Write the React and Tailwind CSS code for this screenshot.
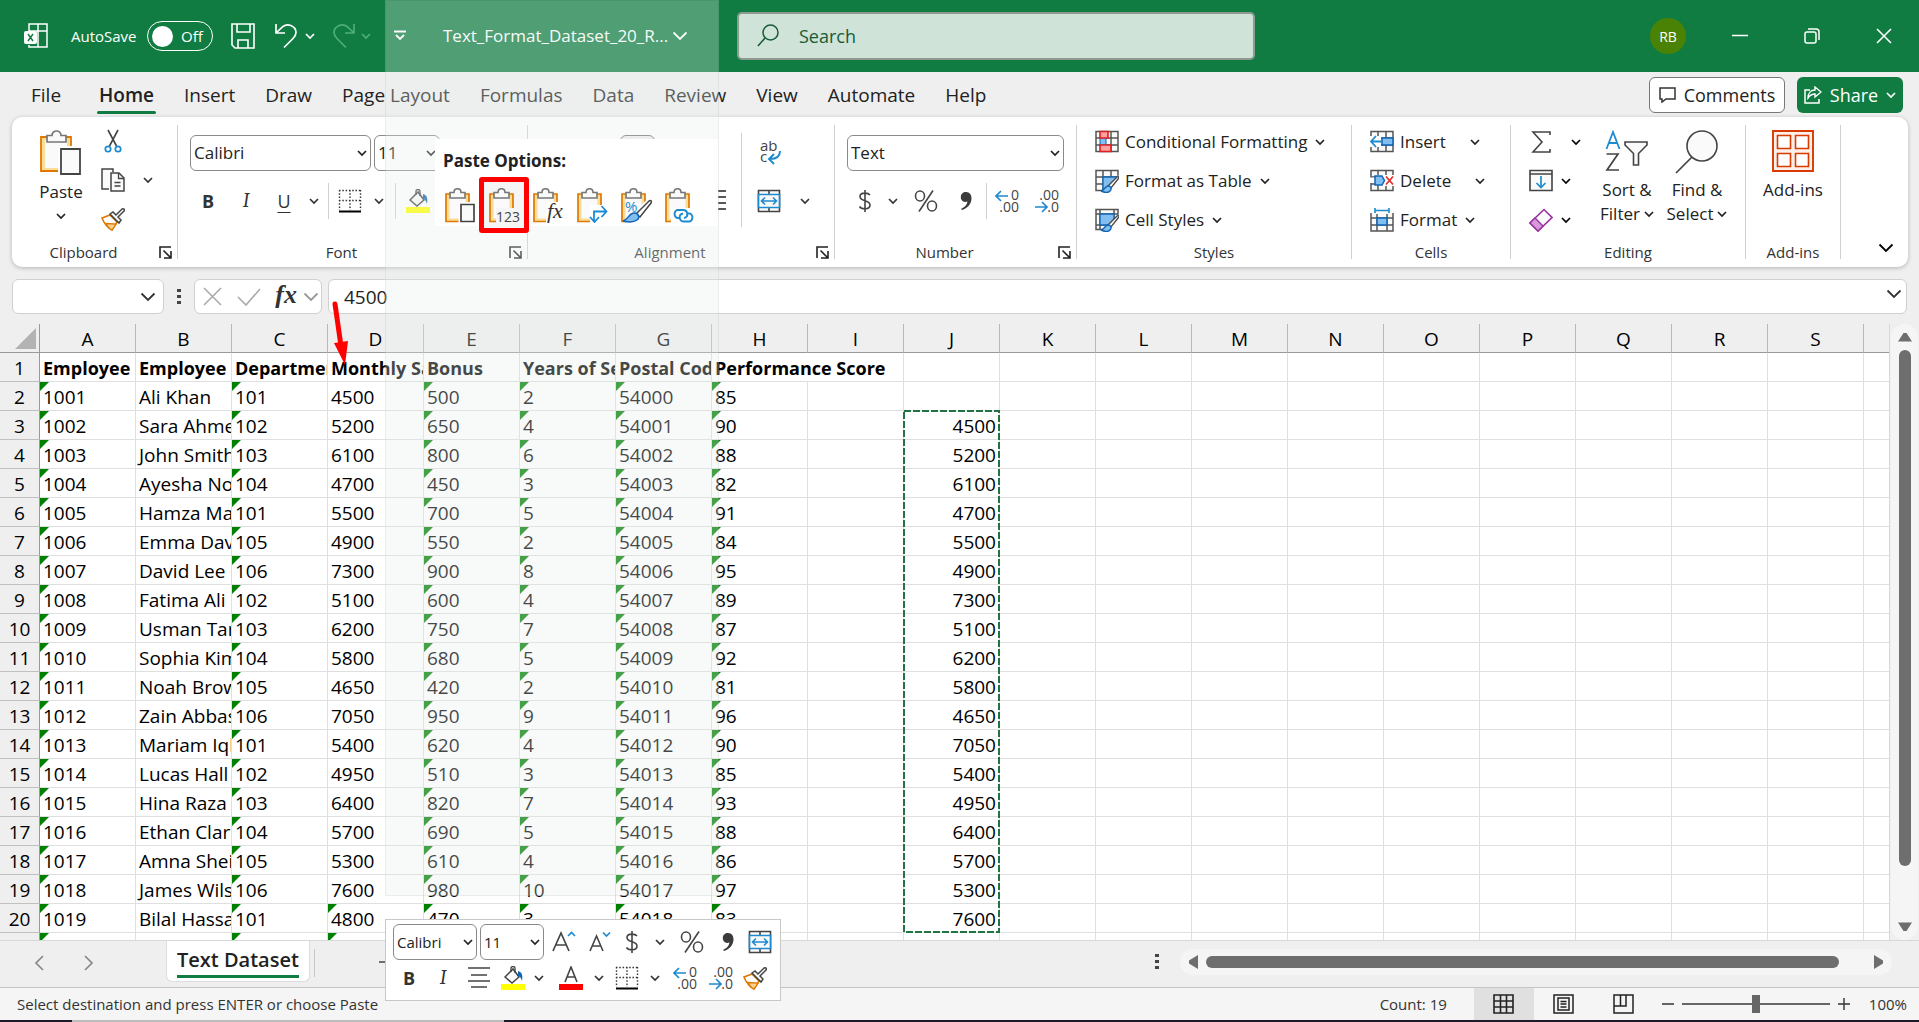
import React, { useState } from 'react'

const COLUMNS = 'ABCDEFGHIJKLMNOPQRST'.split('')

const HEADERS = ['Employee ID', 'Employee Name', 'Department', 'Monthly Salary', 'Bonus', 'Years of Service', 'Postal Code']

const ROWS = [
  [1001, 'Ali Khan', 101, 4500, 500, 2, 54000, 85],
  [1002, 'Sara Ahmed', 102, 5200, 650, 4, 54001, 90],
  [1003, 'John Smith', 103, 6100, 800, 6, 54002, 88],
  [1004, 'Ayesha Noor', 104, 4700, 450, 3, 54003, 82],
  [1005, 'Hamza Malik', 101, 5500, 700, 5, 54004, 91],
  [1006, 'Emma Davis', 105, 4900, 550, 2, 54005, 84],
  [1007, 'David Lee', 106, 7300, 900, 8, 54006, 95],
  [1008, 'Fatima Ali', 102, 5100, 600, 4, 54007, 89],
  [1009, 'Usman Tariq', 103, 6200, 750, 7, 54008, 87],
  [1010, 'Sophia Kim', 104, 5800, 680, 5, 54009, 92],
  [1011, 'Noah Brown', 105, 4650, 420, 2, 54010, 81],
  [1012, 'Zain Abbas', 106, 7050, 950, 9, 54011, 96],
  [1013, 'Mariam Iqbal', 101, 5400, 620, 4, 54012, 90],
  [1014, 'Lucas Hall', 102, 4950, 510, 3, 54013, 85],
  [1015, 'Hina Raza', 103, 6400, 820, 7, 54014, 93],
  [1016, 'Ethan Clark', 104, 5700, 690, 5, 54015, 88],
  [1017, 'Amna Sheikh', 105, 5300, 610, 4, 54016, 86],
  [1018, 'James Wilson', 106, 7600, 980, 10, 54017, 97],
  [1019, 'Bilal Hassan', 101, 4800, 470, 3, 54018, 83]
]

const COPIED = [4500, 5200, 6100, 4700, 5500, 4900, 7300, 5100, 6200, 5800, 4650, 7050, 5400, 4950, 6400, 5700, 5300, 7600]

const TABS = ['File', 'Home', 'Insert', 'Draw', 'Page Layout', 'Formulas', 'Data', 'Review', 'View', 'Automate', 'Help']

/* ---------- icons ---------- */

const Svg = ({ w = 24, h = 24, children, className = '' }) => (
  <svg width={w} height={h} viewBox={`0 0 ${w} ${h}`} fill="none" className={`shrink-0 ${className}`} aria-hidden="true">
    {children}
  </svg>
)

const Chevron = ({ className = '' }) => (
  <Svg w={10} h={8} className={className}>
    <path d="M1 2l4 4 4-4" stroke="currentColor" strokeWidth="1.700" />
  </Svg>
)

const BigChevron = ({ className = '' }) => (
  <Svg w={16} h={10} className={className}>
    <path d="M1.500 1.500L8 8l6.500-6.500" stroke="currentColor" strokeWidth="1.800" />
  </Svg>
)

const Board = () => (
  <>
    <path d="M1 6h23v27.500H1z" fill="#f9dc96" stroke="#e07800" strokeWidth="1.700" />
    <path d="M4.500 9h16v21.500h-16z" fill="#fafafa" />
    <path d="M5 4.500h4c0-5 7-5 7 0h4V10H5z" fill="#fafafa" stroke="#777" strokeWidth="1.600" />
  </>
)

const PasteBig = () => (
  <Svg w={42} h={46}>
    <path d="M1 7h30v34H1z" fill="#f9dc96" stroke="#e07800" strokeWidth="1.800" />
    <path d="M5 10h22v28H5z" fill="#fafafa" />
    <path d="M7 5.500h5c0-6 9-6 9 0h5V12H7z" fill="#fafafa" stroke="#777" strokeWidth="1.700" />
    <path d="M18 16h24v30H18z" fill="#fff" />
    <path d="M21 19h19v25H21z" fill="#fafafa" stroke="#444" strokeWidth="1.800" />
  </Svg>
)

const PastePlain = () => (
  <Svg w={31} h={35}>
    <Board />
    <path d="M13.500 14H31v21H13.500z" fill="#fff" />
    <path d="M16 16.500h13v17H16z" fill="#fafafa" stroke="#444" strokeWidth="1.700" />
  </Svg>
)

const PasteValues = () => (
  <Svg w={31} h={35}>
    <Board />
    <path d="M7 20h24v15H7z" fill="#f5f5f5" />
    <text x="7" y="34" fontSize="14" fill="#444" fontFamily="Open Sans, sans-serif">123</text>
  </Svg>
)

const PasteFormulas = () => (
  <Svg w={31} h={35}>
    <Board />
    <path d="M13 14h18v21H13z" fill="#fff" />
    <text x="14" y="30" fontSize="22" fontStyle="italic" fill="#333" fontFamily="Liberation Serif, serif">fx</text>
  </Svg>
)

const PasteTranspose = () => (
  <Svg w={31} h={35}>
    <Board />
    <path d="M13 17h18v18H13z" fill="#fff" />
    <path d="M17 33V23.500h12M13 29l4.500 5 4.500-5M24.500 18l5 5.500-5 5.500" stroke="#1e8bd0" strokeWidth="1.800" />
  </Svg>
)

const PasteFormatting = () => (
  <Svg w={31} h={35}>
    <Board />
    <path d="M5 30L28 10l3 3v22H5z" fill="#fff" />
    <text x="4" y="24" fontSize="15" fill="#1e8bd0" fontFamily="Open Sans, sans-serif">%</text>
    <path d="M15 26L28 13c2-1 3 0 2 2L19 29z" fill="#fff" stroke="#444" strokeWidth="1.500" />
    <path d="M2 33c5-1 6-8 11-8 5 0 6 5 3 7-4 3-10 2-14 1z" fill="#83bef0" stroke="#1065b5" strokeWidth="1.500" />
  </Svg>
)

const PasteLink = () => (
  <Svg w={31} h={35}>
    <Board />
    <path d="M6 20h25v15H6z" fill="#fff" />
    <path d="M14 30h-2a4.500 4.500 0 010-8h6c5 0 6 7 1 8M23 25.500h2a4.500 4.500 0 010 8h-6c-5 0-6-7-1-8" stroke="#1e8bd0" strokeWidth="1.900" />
  </Svg>
)

const CutIcon = () => (
  <Svg>
    <path d="M7 1l8.500 16M17 1L8.500 17" stroke="#444" strokeWidth="1.600" />
    <circle cx="7" cy="20" r="2.700" stroke="#1e8bd0" strokeWidth="1.700" />
    <circle cx="17" cy="20" r="2.700" stroke="#1e8bd0" strokeWidth="1.700" />
  </Svg>
)

const CopyIcon = () => (
  <Svg>
    <path d="M8 21H1V1h11v3" fill="#fafafa" stroke="#444" strokeWidth="1.500" />
    <path d="M10 5h8l5 5v13H10z" fill="#fafafa" stroke="#444" strokeWidth="1.500" />
    <path d="M17.500 5v5.500H23M13.500 14.500h6M13.500 18h6" stroke="#444" strokeWidth="1.300" />
  </Svg>
)

const PainterIcon = () => (
  <Svg>
    <path d="M1 11l8-3 7 7-5 8C7 21 3 16 1 11z" fill="#fff" stroke="#e07800" strokeWidth="1.600" />
    <path d="M5 16.500l10 .5-4 6c-2.500-1-4.500-3.500-6-6.500z" fill="#fbd492" stroke="#e07800" strokeWidth="1.300" />
    <path d="M9 7l3-2 3 3 6-6c2-1 3 1 2 2l-6 6 3 3-2 3z" fill="#fafafa" stroke="#444" strokeWidth="1.500" />
  </Svg>
)

const BordersIcon = () => (
  <Svg>
    <path d="M1.500 1v20M12 1v20M22.500 1v20M1 1.500h22M1 11.500h22" stroke="#333" strokeWidth="1.400" strokeDasharray="1.500 1.800" />
    <path d="M1 22.500h22" stroke="#000" strokeWidth="2" />
  </Svg>
)

const FillIcon = () => (
  <Svg>
    <path d="M4 11l8-8 6 8-7 6z" fill="#fafafa" stroke="#444" strokeWidth="1.500" />
    <path d="M10 6V2c0-2 4-2 4 0v5" stroke="#444" strokeWidth="1.300" />
    <path d="M17 5c4 1 5 4 4 10-1-3-2-5-4-5z" fill="#1065b5" />
    <path d="M0 18h24v6H0z" fill="#ff0" />
  </Svg>
)

const FontColorIcon = () => (
  <Svg>
    <path d="M6 16L12 1l6 15M8 11h8" stroke="#444" strokeWidth="1.600" />
    <path d="M0 18h24v6H0z" fill="#f00" />
  </Svg>
)

const WrapIcon = () => (
  <Svg>
    <text x="1" y="10" fontSize="15" fill="#444" fontFamily="Open Sans, sans-serif">ab</text>
    <text x="1" y="21" fontSize="15" fill="#444" fontFamily="Open Sans, sans-serif">c</text>
    <path d="M21 10c0 5-3 8-10 8M15 13l-5 5 5 5" stroke="#1e8bd0" strokeWidth="1.900" />
  </Svg>
)

const MergeIcon = () => (
  <Svg>
    <path d="M1.500 1.500h21v21h-21zM12 1v5M12 18v5" fill="#fafafa" stroke="#444" strokeWidth="1.600" />
    <path d="M1.500 5.500h21v13h-21z" fill="#fafafa" stroke="#1e8bd0" strokeWidth="1.700" />
    <path d="M4.500 12h15M8 8.500L4.500 12 8 15.500M16 8.500l3.500 3.500-3.500 3.500" stroke="#1e8bd0" strokeWidth="1.600" />
  </Svg>
)

const IncDecimal = () => (
  <Svg>
    <path d="M1 7h12M6 2L1 7l5 5" stroke="#1e8bd0" strokeWidth="1.700" />
    <text x="24" y="11" textAnchor="end" fontSize="14" fill="#444" fontFamily="Open Sans, sans-serif">0</text>
    <text x="24" y="23" textAnchor="end" fontSize="14" fill="#444" fontFamily="Open Sans, sans-serif">.00</text>
  </Svg>
)

const DecDecimal = () => (
  <Svg>
    <text x="24" y="11" textAnchor="end" fontSize="14" fill="#444" fontFamily="Open Sans, sans-serif">.00</text>
    <text x="24" y="23" textAnchor="end" fontSize="14" fill="#444" fontFamily="Open Sans, sans-serif">.0</text>
    <path d="M0 18h12M7 13l5 5-5 5" stroke="#1e8bd0" strokeWidth="1.700" />
  </Svg>
)

const CommaIcon = () => (
  <Svg w={12} h={20}>
    <path d="M6 1c4 0 5.500 3 5.500 6.500C11.500 13 7 18 1.500 19v-1.500C5 16 7 14 7.500 10.500 3 12 .8 9 .8 6 .8 3 3 1 6 1z" fill="#3b3b3b" />
  </Svg>
)

const DollarIcon = () => (
  <Svg w={14} h={24}>
    <path d="M12 6C10 3.500 2 3 2 7.500 2 13 12 10.500 12 16c0 5-8.500 4.500-10.500 1.500M7 1v22" stroke="#444" strokeWidth="1.600" />
  </Svg>
)

const PercentIcon = () => (
  <Svg>
    <path d="M19 1.500L5 22.500" stroke="#444" strokeWidth="1.600" />
    <ellipse cx="6" cy="7" rx="4.500" ry="5" stroke="#444" strokeWidth="1.600" />
    <ellipse cx="18" cy="17" rx="4.500" ry="5" stroke="#444" strokeWidth="1.600" />
  </Svg>
)

const Grid = ({ d = 'M1 1.500h22v20H1zM1 8h22M1 15h22M8 1v21M16 1v21' }) => (
  <path d={d} fill="#fafafa" stroke="#555" strokeWidth="1.500" />
)

const Brush = () => (
  <>
    <path d="M13 23L24 6v17z" fill="#fff" />
    <path d="M13 17L22 8c1.500-1 2.500 0 1.500 1.500L16 19z" fill="#fafafa" stroke="#444" strokeWidth="1.300" />
    <path d="M6 22c3 0 4-5 7-5s4 3 2 5-6 1.500-9 0z" fill="#83bef0" stroke="#1065b5" strokeWidth="1.400" />
  </>
)

const ConditionalIcon = () => (
  <Svg>
    <Grid />
    <path d="M5 8h6v7H5z" fill="#83bef0" stroke="#1065b5" />
    <path d="M5 1.500h8V8H5zM5 15h11v6.500H5z" fill="#ff9f9f" stroke="#e02020" strokeWidth="1.600" />
  </Svg>
)

const TableIcon = () => (
  <Svg>
    <Grid />
    <path d="M8 8h15v14H8z" fill="#83bef0" stroke="#1065b5" strokeWidth="1.300" />
    <Brush />
  </Svg>
)

const CellStylesIcon = () => (
  <Svg>
    <Grid d="M1 1.500h22v20H1zM1 6h22M1 17h22M5 1v21M19 1v21" />
    <path d="M5 6h14v11H5z" fill="#83bef0" stroke="#1065b5" strokeWidth="1.300" />
    <Brush />
  </Svg>
)

const InsertCellsIcon = () => (
  <Svg>
    <Grid />
    <path d="M12 8h11v7H12z" fill="#83bef0" stroke="#1065b5" strokeWidth="1.500" />
    <path d="M0 6h11v11H0z" fill="#fff" />
    <path d="M1 11.500h11M6 6l-5 5.500L6 17" stroke="#1e8bd0" strokeWidth="1.800" />
  </Svg>
)

const DeleteCellsIcon = () => (
  <Svg>
    <Grid d="M1 1.500h22v20H1zM1 8h5M1 15h5M8 1v5M16 1v5M8 16v5M16 16v5" />
    <path d="M13 6h11v11H13zM0 8.500h4v5.500H0z" fill="#fff" />
    <path d="M5 7h7l2.500 4.500L12 16H5z" fill="#83bef0" stroke="#1065b5" strokeWidth="1.500" />
    <path d="M16 7.500l7 8M23 7.500l-7 8" stroke="#e83030" strokeWidth="1.800" />
  </Svg>
)

const FormatCellsIcon = () => (
  <Svg>
    <Grid d="M1 5v18h22V5M1 10h22M1 17h22M7 6v17M17 6v17" />
    <path d="M7 10h10v7H7z" fill="#83bef0" stroke="#1065b5" strokeWidth="1.500" />
    <path d="M5 2.500h14M5 0v5M19 0v5" stroke="#1e8bd0" strokeWidth="1.600" />
  </Svg>
)

const SigmaIcon = () => (
  <Svg>
    <path d="M21 5V2H4l9 10-9 10h17v-3" stroke="#444" strokeWidth="1.600" />
  </Svg>
)

const FillDownIcon = () => (
  <Svg>
    <path d="M1 1.500h22v20H1zM1 5h22" fill="#fafafa" stroke="#444" strokeWidth="1.600" />
    <path d="M12 7v11M7.500 14l4.500 4.500 4.500-4.500" stroke="#1e8bd0" strokeWidth="1.700" />
  </Svg>
)

const EraserIcon = () => (
  <Svg>
    <path d="M15 1.500l8 8L9 23l-8-8z" fill="#fafafa" stroke="#9a34a0" strokeWidth="1.600" />
    <path d="M6 10l8 8-5 5-8-8z" fill="#d898dc" stroke="#9a34a0" strokeWidth="1.400" />
  </Svg>
)

const SortIcon = () => (
  <Svg w={44} h={44}>
    <path d="M1.500 19L8 2l6.500 17M4 13h8" stroke="#1e8bd0" strokeWidth="1.800" />
    <path d="M1.500 24H13L2 40h12" stroke="#444" strokeWidth="1.700" />
    <path d="M20 12h22v3l-8.500 8.500V35h-5V23.500L20 15z" fill="#fafafa" stroke="#444" strokeWidth="1.600" />
  </Svg>
)

const FindIcon = () => (
  <Svg w={44} h={44}>
    <circle cx="27" cy="16" r="15" fill="#fafafa" stroke="#444" strokeWidth="1.600" />
    <path d="M17 27L1 43" stroke="#444" strokeWidth="1.700" />
  </Svg>
)

const AddinsIcon = () => (
  <Svg w={42} h={42}>
    <path d="M1 1h40v40H1z" fill="#fdf0ea" stroke="#d83b01" strokeWidth="1.900" />
    <path d="M5.500 5.500h13v13h-13zM23.500 5.500h13v13h-13zM5.500 23.500h13v13h-13zM23.500 23.500h13v13h-13z" fill="#fff" stroke="#d83b01" strokeWidth="1.600" />
  </Svg>
)

const Launcher = ({ className = '' }) => (
  <button aria-label="More options" className={`flex size-4 items-center justify-center ${className}`}>
    <Svg w={13} h={13}>
      <path d="M1 12V1h11M4.500 4.500l7 7M12 5v7H5" stroke="#222" strokeWidth="1.600" />
    </Svg>
  </button>
)

/* ---------- small building blocks ---------- */

const IconBtn = ({ label, children, className = 'w-10' }) => (
  <button aria-label={label} className={`flex h-9 shrink-0 items-center justify-center text-[#333] ${className}`}>
    {children}
  </button>
)

const Picker = ({ label, options, className = '', textClass = 'text-[17px]' }) => (
  <label className={`relative block h-9 ${className}`}>
    <span className="sr-only">{label}</span>
    <select className={`h-9 w-full appearance-none rounded-md border border-[#8a8a8a] bg-white pl-[3px] text-[#222] ${textClass}`}>
      {options.map((o) => <option key={o}>{o}</option>)}
    </select>
    <Chevron className="pointer-events-none absolute top-[14px] right-1 text-[#222]" />
  </label>
)

const Group = ({ name, className = '', launcher = false, children }) => (
  <>
    <section aria-label={name} className={`flex shrink-0 flex-col pt-[5px] ${className}`}>
      <div className="h-[118px]">{children}</div>
      <div className={`relative flex h-6 items-center justify-center text-[15px] text-[#333] ${launcher ? 'pr-[22px]' : ''}`}>
        {name}
        {launcher && <Launcher className="absolute right-1" />}
      </div>
    </section>
    <div className="my-2 w-px shrink-0 bg-[#d0d0d0]" />
  </>
)

const MenuRow = ({ icon, text, gap = 'gap-2' }) => (
  <button className="flex h-[39px] items-center gap-[6px] text-[17px] text-[#222]">
    {icon}
    <span className={`flex items-center ${gap}`}>{text}<Chevron /></span>
  </button>
)

const Divider = () => <div className="h-9 w-px shrink-0 bg-[#d0d0d0]" />

/* ---------- sections ---------- */

function TitleBar() {
  const [autoSave, setAutoSave] = useState(false)

  return (
    <header className="flex h-[72px] shrink-0 items-center bg-[#107c41] text-white">
      <Svg w={24} h={26} className="ml-6">
        <path d="M5 9V1h18v23H5v-2M14 1v23M5 8h18" stroke="#fff" strokeWidth="1.500" />
        <rect x="0" y="8" width="13" height="13" rx="2" fill="#fff" />
        <path d="M4 11l5 7M9 11l-5 7" stroke="#107c41" strokeWidth="1.500" />
      </Svg>
      <span className="ml-[23px] w-[66px] text-[15px]">AutoSave</span>
      <button
        role="switch"
        aria-checked={autoSave}
        aria-label="AutoSave"
        onClick={() => setAutoSave(!autoSave)}
        className="ml-[10px] flex h-[30px] w-[66px] items-center gap-2 rounded-full border border-white pl-1 text-[15px]"
      >
        <span className="size-[21px] rounded-full bg-white" />
        {autoSave ? 'On' : 'Off'}
      </button>
      <button aria-label="Save" className="ml-[18px]">
        <Svg w={24} h={26}>
          <path d="M1 1h22v24H4l-3-3zM6 1v8h13V1M7 25v-8h10v8" stroke="#fff" strokeWidth="1.600" />
        </Svg>
      </button>
      <button aria-label="Undo" className="ml-5">
        <Svg w={24} h={26}>
          <path d="M1 1v9h9M1.500 9.500L8 3.500c5-4 13 0 13 6 0 3-1 4-3 6l-9 9" stroke="#fff" strokeWidth="1.700" />
        </Svg>
      </button>
      <button aria-label="Undo history" className="ml-[6px]"><Chevron /></button>
      <button aria-label="Redo" className="ml-4 text-[#4fae78]">
        <Svg w={24} h={26}>
          <path d="M23 1v9h-9M22.500 9.500L16 3.500c-5-4-13 0-13 6 0 3 1 4 3 6l9 9" stroke="currentColor" strokeWidth="1.700" />
        </Svg>
      </button>
      <button aria-label="Redo history" className="ml-[6px] text-[#4fae78]"><Chevron /></button>
      <button aria-label="Customize toolbar" className="ml-[23px]">
        <Svg w={12} h={12}>
          <path d="M0 1.500h12M2 5l4 4 4-4" stroke="#fff" strokeWidth="1.900" />
        </Svg>
      </button>
      <button className="ml-[37px] flex w-[246px] items-center gap-1 text-[17px]">
        <span className="whitespace-nowrap">Text_Format_Dataset_20_R...</span>
        <BigChevron />
      </button>
      <label className="ml-12 flex h-12 w-[518px] items-center gap-5 rounded-[5px] border-2 border-[#8d9b93] bg-[#cfe3d8] pl-[18px] text-[#185c37]">
        <Svg w={22} h={24}>
          <circle cx="13.500" cy="8.500" r="7.500" stroke="currentColor" strokeWidth="1.500" />
          <path d="M8 14L1 22" stroke="currentColor" strokeWidth="1.600" />
        </Svg>
        <input type="search" placeholder="Search" aria-label="Search" className="min-w-0 flex-1 bg-transparent text-lg outline-none placeholder:text-[#185c37]" />
      </label>
      <div className="ml-auto flex items-center">
        <button aria-label="Account" className="mr-[46px] size-9 rounded-full bg-[#498205] text-[14px]">RB</button>
        <button aria-label="Minimize" className="mr-[56px]">
          <Svg w={16} h={16}><path d="M0 7.500h16" stroke="#fff" strokeWidth="1.500" /></Svg>
        </button>
        <button aria-label="Restore" className="mr-[56px]">
          <Svg w={16} h={16}>
            <rect x="1" y="4" width="11" height="11" rx="2" stroke="#fff" strokeWidth="1.500" />
            <path d="M4 1h8c2 0 3 1 3 3v8" stroke="#fff" strokeWidth="1.500" />
          </Svg>
        </button>
        <button aria-label="Close" className="mr-[27px]">
          <Svg w={16} h={16}><path d="M1 1l14 14M15 1L1 15" stroke="#fff" strokeWidth="1.600" /></Svg>
        </button>
      </div>
    </header>
  )
}

function RibbonTabs() {
  const [active, setActive] = useState('Home')

  return (
    <nav className="flex h-[45px] shrink-0 items-center pr-4 pl-4 text-lg text-[#222]">
      {TABS.map((t) => (
        <button key={t} onClick={() => setActive(t)} className="relative h-[38px] px-[15px] pt-[2px] text-[19px] whitespace-nowrap first:mr-2">
          <span className={active === t ? 'font-semibold' : ''}>{t}</span>
          {active === t && <span className="absolute inset-x-[13px] bottom-0 h-[3px] rounded bg-[#107c41]" />}
        </button>
      ))}
      <button className="mr-3 ml-auto flex h-9 w-[136px] items-center justify-center gap-2 rounded-md border border-[#777] bg-white">
        <Svg w={17} h={16}><path d="M1 1h15v11H7l-4 3v-3H1z" stroke="#333" strokeWidth="1.500" /></Svg>
        Comments
      </button>
      <button className="flex h-9 w-[106px] items-center justify-center gap-2 rounded-md bg-[#107c41] text-white">
        <Svg w={18} h={18}>
          <path d="M6 4H1v13h14v-4" stroke="#fff" strokeWidth="1.500" />
          <path d="M11 1l6 5-6 5V8C8 8 6 9 4 12c0-5 3-8 7-8z" stroke="#fff" strokeWidth="1.400" />
        </Svg>
        Share
        <Chevron />
      </button>
    </nav>
  )
}

function Ribbon() {
  return (
    <div className="mx-3 mr-[11px] flex h-[150px] shrink-0 rounded-[10px] bg-white shadow-[0_1px_4px_rgba(0,0,0,0.250)]">
      <Group name="Clipboard" launcher className="w-[165px]">
        <div className="flex pl-3">
          <button className="flex w-[74px] flex-col items-center pt-2 text-[17px] text-[#222]">
            <PasteBig />
            <span className="mt-1 leading-6">Paste</span>
            <Chevron className="mt-2" />
          </button>
          <div className="flex flex-col gap-[3px] pt-px pl-[2px]">
            <IconBtn label="Cut" className="w-[26px]"><CutIcon /></IconBtn>
            <IconBtn label="Copy" className="w-[26px]"><CopyIcon /></IconBtn>
            <IconBtn label="Format painter" className="w-[26px]"><PainterIcon /></IconBtn>
          </div>
          <IconBtn label="Copy options" className="mt-10 ml-[2px] w-10"><Chevron /></IconBtn>
        </div>
      </Group>

      <Group name="Font" launcher className="w-[349px]">
        <div className="flex gap-[3px] pt-[13px] pl-3">
          <Picker label="Font" options={['Calibri', 'Arial']} className="w-[181px]" />
          <Picker label="Font size" options={['11', '12']} className="w-[66px]" />
        </div>
        <div className="mt-3 flex items-center pl-3">
          <IconBtn label="Bold" className="w-9 text-lg font-bold">B</IconBtn>
          <IconBtn label="Italic" className="w-10 font-serif text-xl italic">I</IconBtn>
          <IconBtn label="Underline" className="w-9 text-lg underline underline-offset-4">U</IconBtn>
          <IconBtn label="Underline options" className="mr-[2px] w-6"><Chevron /></IconBtn>
          <Divider />
          <IconBtn label="Borders" className="w-[42px]"><BordersIcon /></IconBtn>
          <IconBtn label="Border options" className="mr-2 w-4"><Chevron /></IconBtn>
          <Divider />
          <IconBtn label="Fill color" className="w-11"><FillIcon /></IconBtn>
        </div>
      </Group>

      <Group name="Alignment" launcher className="w-[306px]">
        <div className="flex pl-[92px]">
          <div className="flex w-[108px] flex-col items-start">
            <button aria-label="Middle align" className="mt-[13px] h-9 w-[35px] rounded-md border border-[#777] bg-[#f0f0f0]" />
            <IconBtn label="Increase indent" className="mt-3 w-6 self-end">
              <Svg><path d="M1 2h21M7 8h15M7 14h15M1 20h21" stroke="#222" strokeWidth="1.600" /></Svg>
            </IconBtn>
          </div>
          <div className="mt-[11px] ml-[13px] h-[94px] w-px bg-[#d0d0d0]" />
          <div className="flex flex-col items-start pl-[7px]">
            <IconBtn label="Wrap text" className="mt-[13px] w-11"><WrapIcon /></IconBtn>
            <div className="mt-3 flex">
              <IconBtn label="Merge and center"><MergeIcon /></IconBtn>
              <IconBtn label="Merge options" className="w-8"><Chevron /></IconBtn>
            </div>
          </div>
        </div>
      </Group>

      <Group name="Number" launcher className="w-[241px]">
        <div className="px-3 pt-[13px]">
          <Picker label="Number format" options={['Text', 'General']} />
        </div>
        <div className="mt-3 flex items-center pl-3">
          <IconBtn label="Currency" className="w-9"><DollarIcon /></IconBtn>
          <IconBtn label="Currency options" className="mr-[3px] w-5"><Chevron /></IconBtn>
          <IconBtn label="Percent"><PercentIcon /></IconBtn>
          <IconBtn label="Comma style"><CommaIcon /></IconBtn>
          <Divider />
          <IconBtn label="Increase decimal"><IncDecimal /></IconBtn>
          <IconBtn label="Decrease decimal"><DecDecimal /></IconBtn>
        </div>
      </Group>

      <Group name="Styles" className="w-[274px]">
        <div className="pl-[18px]">
          <MenuRow icon={<ConditionalIcon />} text="Conditional Formatting" />
          <MenuRow icon={<TableIcon />} text="Format as Table" />
          <MenuRow icon={<CellStylesIcon />} text="Cell Styles" />
        </div>
      </Group>

      <Group name="Cells" className="w-[158px]">
        <div className="pl-[18px]">
          <MenuRow icon={<InsertCellsIcon />} text="Insert" gap="gap-6" />
          <MenuRow icon={<DeleteCellsIcon />} text="Delete" gap="gap-6" />
          <MenuRow icon={<FormatCellsIcon />} text="Format" />
        </div>
      </Group>

      <Group name="Editing" className="w-[234px]">
        <div className="flex pl-[18px]">
          <div className="w-16">
            <button aria-label="AutoSum" className="flex h-[39px] items-center gap-[18px]"><SigmaIcon /><Chevron /></button>
            <button aria-label="Fill" className="flex h-[39px] items-center gap-2"><FillDownIcon /><Chevron /></button>
            <button aria-label="Clear" className="flex h-[39px] items-center gap-2"><EraserIcon /><Chevron /></button>
          </div>
          <button className="flex w-[68px] flex-col items-center pt-2 text-[17px] leading-6 text-[#222]">
            <SortIcon />
            <span className="mt-1 whitespace-nowrap">Sort &amp;</span>
            <span className="flex items-center gap-1">Filter <Chevron /></span>
          </button>
          <button className="flex w-[72px] flex-col items-center pt-2 text-[17px] leading-6 text-[#222]">
            <FindIcon />
            <span className="mt-1 whitespace-nowrap">Find &amp;</span>
            <span className="flex items-center gap-1">Select <Chevron /></span>
          </button>
        </div>
      </Group>

      <Group name="Add-ins" className="w-[94px]">
        <button className="flex w-full flex-col items-center pt-2 text-[17px] leading-6 text-[#222]">
          <AddinsIcon />
          <span className="mt-[6px]">Add-ins</span>
        </button>
      </Group>

      <button aria-label="Collapse ribbon" className="mt-auto mr-[14px] mb-[14px] ml-auto"><BigChevron /></button>
    </div>
  )
}

function FormulaBar() {
  return (
    <div className="mx-3 mt-3 mb-[10px] flex h-[35px] shrink-0">
      <label className="relative w-[152px]">
        <span className="sr-only">Name box</span>
        <input className="h-full w-full rounded-md border border-[#d0d0d0] bg-white px-2" />
        <BigChevron className="absolute top-[13px] right-2 text-[#333]" />
      </label>
      <div className="flex w-[30px] items-center justify-center">
        <Svg w={4} h={16}><path d="M0 0h4v3H0zM0 6h4v3H0zM0 12h4v3H0z" fill="#444" /></Svg>
      </div>
      <div className="flex w-32 items-center rounded-md border border-[#d0d0d0] bg-white pl-2">
        <button aria-label="Cancel"><Svg w={20} h={20}><path d="M1 1l17 17M18 1L1 18" stroke="#aaa" strokeWidth="1.600" /></Svg></button>
        <button aria-label="Enter" className="ml-[14px]"><Svg w={24} h={18}><path d="M1 9l8 8L23 1" stroke="#aaa" strokeWidth="1.600" /></Svg></button>
        <button aria-label="Insert function" className="ml-auto pb-1 font-['Liberation_Serif',serif] text-[26px] leading-none font-bold text-[#333] italic">fx</button>
        <BigChevron className="mr-[2px] ml-[6px] text-[#999]" />
      </div>
      <label className="relative ml-[6px] flex-1">
        <span className="sr-only">Formula</span>
        <input defaultValue="4500" className="h-full w-full rounded-md border border-[#d0d0d0] bg-white pl-[15px] text-[19px] text-[#222]" />
        <BigChevron className="absolute top-[10px] right-[5px] text-[#333]" />
      </label>
    </div>
  )
}

const Cell = ({ value, flag, className = '', children, ...rest }) => (
  <td className={`relative h-[29px] border-r border-b border-[#dfdfdf] p-0 ${className}`} {...rest}>
    {flag && (
      <Svg w={9} h={9} className="absolute top-0 left-0"><path d="M0 0h9L0 9z" fill="#008000" /></Svg>
    )}
    <div className="overflow-hidden px-[3px] pt-[2px] leading-[26px] whitespace-nowrap">{value}</div>
    {children}
  </td>
)

const RowHead = ({ n }) => (
  <th scope="row" className="h-[29px] border-r border-b border-r-[#999] border-b-[#c0c0c0] bg-[#efefef] p-0 pt-[2px] text-[19px] leading-[26px] font-normal">{n}</th>
)

function Sheet() {
  return (
    <div className="flex min-h-0 flex-1">
      <div className="min-w-0 flex-1 overflow-hidden border-r border-[#d8d8d8] bg-white">
        <table className="w-[1960px] table-fixed border-separate border-spacing-0 text-[19px] text-black">
          <colgroup>
            <col className="w-10" />
            {COLUMNS.map((c) => <col key={c} className="w-24" />)}
          </colgroup>
          <thead>
            <tr>
              <th className="h-[29px] border-r border-b border-[#999] bg-[#efefef] p-0">
                <Svg w={21} h={21} className="ml-[15px]"><path d="M21 0v21H0z" fill="#b3b3b3" /></Svg>
              </th>
              {COLUMNS.map((c) => (
                <th key={c} scope="col" className="h-[29px] border-r border-b border-r-[#b8b8b8] border-b-[#999] bg-[#efefef] p-0 pt-[2px] leading-[26px] font-normal">{c}</th>
              ))}
            </tr>
          </thead>
          <tbody>
            <tr className="text-[18px] font-bold">
              <RowHead n={1} />
              {HEADERS.map((h) => <Cell key={h} value={h} />)}
              <Cell value="Performance Score" colSpan={2} />
              {COLUMNS.slice(9).map((c) => <Cell key={c} />)}
            </tr>
            {ROWS.map((row, r) => (
              <tr key={row[0]}>
                <RowHead n={r + 2} />
                {row.map((v, i) => (
                  <Cell key={i} value={v} flag={i !== 1 && (i !== 3 || r === ROWS.length - 1)} />
                ))}
                <Cell />
                <Cell value={r > 0 ? COPIED[r - 1] : ''} className="text-right">
                  {r === 1 && (
                    <svg className="pointer-events-none absolute -top-px -left-px z-10 h-[523px] w-[97px]" aria-hidden="true">
                      <rect x="1" y="1" width="95" height="521" fill="none" stroke="#217346" strokeWidth="2" strokeDasharray="7 2" />
                    </svg>
                  )}
                </Cell>
                {COLUMNS.slice(10).map((c) => <Cell key={c} />)}
              </tr>
            ))}
            <tr>
              <RowHead n={21} />
              {COLUMNS.map((c, i) => <Cell key={c} flag={i < 8 && i !== 1} />)}
            </tr>
          </tbody>
        </table>
      </div>
      <div className="mr-px ml-px flex w-[27px] shrink-0 flex-col items-center rounded-full bg-[#f5f5f5] py-2">
        <button aria-label="Scroll up"><Svg w={14} h={10}><path d="M5.500 1h3L14 9.500H0z" fill="#6e6e6e" /></Svg></button>
        <div className="mt-2 mb-auto h-[86%] w-3 rounded-full bg-[#6e6e6e]" />
        <button aria-label="Scroll down"><Svg w={14} h={10}><path d="M0 .5h14L8.500 9h-3z" fill="#6e6e6e" /></Svg></button>
      </div>
    </div>
  )
}

function SheetTabs() {
  return (
    <div className="flex h-[47px] shrink-0 items-start border-t border-[#d8d8d8]">
      <div className="flex h-[44px] w-[166px] items-center gap-10 pl-[34px] text-[#888]">
        <button aria-label="Previous sheet"><Svg w={10} h={16}><path d="M9 1L2 8l7 7" stroke="currentColor" strokeWidth="1.700" /></Svg></button>
        <button aria-label="Next sheet"><Svg w={10} h={16}><path d="M1 1l7 7-7 7" stroke="currentColor" strokeWidth="1.700" /></Svg></button>
      </div>
      <button className="flex h-[41px] items-start rounded-b-md border-x border-b border-[#ddd] bg-white px-[10px] pt-1 text-xl font-semibold text-[#222]">
        <span className="border-b-[3px] border-[#107c41] leading-[30px]">Text Dataset</span>
      </button>
      <div className="mt-2 ml-1 h-7 w-px bg-[#c8c8c8]" />
      <button aria-label="New sheet" className="mt-[13px] ml-16">
        <Svg w={16} h={16}><path d="M0 8h16M8 0v16" stroke="#444" strokeWidth="1.600" /></Svg>
      </button>
      <div className="mt-2 mr-[27px] ml-auto flex w-[739px] items-center">
        <Svg w={4} h={16} className="mr-[21px] ml-[2px]"><path d="M0 0h4v3H0zM0 6h4v3H0zM0 12h4v3H0z" fill="#444" /></Svg>
        <div className="flex h-[26px] flex-1 items-center rounded-full bg-[#f5f5f5] px-2">
          <button aria-label="Scroll left"><Svg w={10} h={14}><path d="M10 0v14L1 8.500v-3z" fill="#6e6e6e" /></Svg></button>
          <div className="ml-2 h-3 w-[91%] rounded-full bg-[#6e6e6e]" />
          <button aria-label="Scroll right" className="ml-auto"><Svg w={10} h={14}><path d="M0 0v14l9-5.500v-3z" fill="#6e6e6e" /></Svg></button>
        </div>
      </div>
    </div>
  )
}

function StatusBar() {
  return (
    <footer className="flex h-[33px] shrink-0 items-center border-t border-[#c4c4c4] bg-[#f5f5f5] text-[15px] text-[#333]">
      <span className="ml-[17px]">Select destination and press ENTER or choose Paste</span>
      <span className="mr-[27px] ml-auto">Count: 19</span>
      <button aria-label="Normal view" className="flex h-full w-[60px] items-center justify-center bg-[#e0e0e0]">
        <Svg w={21} h={20}><path d="M1 1h19v18H1zM1 7h19M1 13h19M7.500 1v18M13.500 1v18" stroke="#222" strokeWidth="1.600" /></Svg>
      </button>
      <button aria-label="Page layout view" className="flex h-full w-[60px] items-center justify-center">
        <Svg w={21} h={20}><path d="M1 1h19v18H1zM5 4h11v12H5zM7.500 7.500h6M7.500 10h6M7.500 13h6" stroke="#222" strokeWidth="1.500" /></Svg>
      </button>
      <button aria-label="Page break preview" className="flex h-full w-[60px] items-center justify-center">
        <Svg w={21} h={20}><path d="M1 1h19v18H1zM1 12h12V1M7.500 1v11" stroke="#222" strokeWidth="1.500" /></Svg>
      </button>
      <button aria-label="Zoom out" className="ml-2"><Svg w={12} h={12}><path d="M0 6h12" stroke="#333" strokeWidth="1.500" /></Svg></button>
      <div className="relative mx-2 flex h-5 w-[148px] items-center">
        <div className="h-[2px] w-full bg-[#666]" />
        <div className="absolute left-[70px] h-[18px] w-2 bg-[#666]" />
        <input type="range" min="10" max="190" defaultValue="100" aria-label="Zoom" className="absolute inset-0 w-full opacity-0" />
      </div>
      <button aria-label="Zoom in"><Svg w={12} h={12}><path d="M0 6h12M6 0v12" stroke="#333" strokeWidth="1.400" /></Svg></button>
      <span className="mr-3 ml-[19px]">100%</span>
    </footer>
  )
}

// Faded context menu with only the paste options still opaque
function PasteMenu() {
  const btn = 'flex h-[42px] w-11 items-center justify-center'

  return (
    <div className="absolute top-0 left-[385px] h-[896px] w-[334px] border border-black/5 bg-[#e6edeb]/30">
      <div className="mt-[138px] ml-[49px] h-[87px] bg-white">
        <h2 className="px-2 pt-2 text-[17px] leading-7 font-bold text-[#222]">Paste Options:</h2>
        <div className="mt-[9px] flex pl-[3px]">
          <button aria-label="Paste" className={btn}><PastePlain /></button>
          <button aria-label="Values" className="-mx-[3px] -my-[7px] flex h-14 w-[50px] items-center justify-center rounded-[3px] border-[5px] border-[#ff0000] bg-[#f5f5f5]"><PasteValues /></button>
          <button aria-label="Formulas" className={btn}><PasteFormulas /></button>
          <button aria-label="Transpose" className={btn}><PasteTranspose /></button>
          <button aria-label="Formatting" className={btn}><PasteFormatting /></button>
          <button aria-label="Paste link" className={btn}><PasteLink /></button>
        </div>
      </div>
    </div>
  )
}

function MiniToolbar() {
  return (
    <div className="absolute top-[919px] left-[385px] flex h-[82px] w-[396px] flex-col border border-[#c8c8c8] bg-white pt-1 pl-[7px]">
      <div className="flex items-center">
        <Picker label="Mini toolbar font" options={['Calibri', 'Arial']} className="mr-[3px] w-[84px]" textClass="text-[15px]" />
        <Picker label="Mini toolbar font size" options={['11', '12']} className="w-16" textClass="text-[15px]" />
        <IconBtn label="Increase font size">
          <Svg><path d="M1 21L9 3l8 18M4 15h10" stroke="#444" strokeWidth="1.700" /><path d="M16 6l3.500-3.500L23 6" stroke="#1e8bd0" strokeWidth="1.700" /></Svg>
        </IconBtn>
        <IconBtn label="Decrease font size" className="w-8">
          <Svg w={22}><path d="M1 21L7.500 6 14 21M3.500 16h8" stroke="#444" strokeWidth="1.600" /><path d="M14 2.500L17.500 6 21 2.500" stroke="#1e8bd0" strokeWidth="1.700" /></Svg>
        </IconBtn>
        <IconBtn label="Currency" className="w-8"><DollarIcon /></IconBtn>
        <IconBtn label="Currency options" className="w-6"><Chevron /></IconBtn>
        <IconBtn label="Percent"><PercentIcon /></IconBtn>
        <IconBtn label="Comma style" className="w-8"><CommaIcon /></IconBtn>
        <IconBtn label="Merge and center" className="w-8"><MergeIcon /></IconBtn>
      </div>
      <div className="flex items-center">
        <IconBtn label="Bold" className="w-8 text-lg font-bold">B</IconBtn>
        <IconBtn label="Italic" className="w-9 font-serif text-xl italic">I</IconBtn>
        <IconBtn label="Center" className="w-9">
          <Svg><path d="M1 2h22M4 9h16M1 15h22M4 21h16" stroke="#444" strokeWidth="1.600" /></Svg>
        </IconBtn>
        <IconBtn label="Fill color" className="w-8"><FillIcon /></IconBtn>
        <IconBtn label="Fill options" className="mr-[2px] w-5"><Chevron /></IconBtn>
        <IconBtn label="Font color"><FontColorIcon /></IconBtn>
        <IconBtn label="Font color options" className="w-4"><Chevron /></IconBtn>
        <IconBtn label="Borders"><BordersIcon /></IconBtn>
        <IconBtn label="Border options" className="w-4"><Chevron /></IconBtn>
        <IconBtn label="Increase decimal" className="w-11"><IncDecimal /></IconBtn>
        <IconBtn label="Decrease decimal" className="w-7"><DecDecimal /></IconBtn>
        <IconBtn label="Format painter"><PainterIcon /></IconBtn>
      </div>
    </div>
  )
}

export default function App() {
  return (
    <div className="relative flex h-screen flex-col overflow-hidden bg-[#efefef] font-['Open_Sans','Noto_Sans',sans-serif]">
      <TitleBar />
      <RibbonTabs />
      <Ribbon />
      <FormulaBar />
      <Sheet />
      <SheetTabs />
      <StatusBar />
      <div className="flex h-[2px] shrink-0 bg-[#1f1a2b]">
        <div className="ml-[72px] w-[432px] bg-[#bbb]" />
      </div>
      <PasteMenu />
      <MiniToolbar />
      {/* Arrow pointing at column D */}
      <svg className="pointer-events-none absolute top-[300px] left-[329px] z-20" width="24" height="68" aria-hidden="true">
        <path d="M6 4l6 42" stroke="#f00" strokeWidth="5" strokeLinecap="round" />
        <path d="M5 43l14-2-3 24z" fill="#f00" />
      </svg>
    </div>
  )
}
